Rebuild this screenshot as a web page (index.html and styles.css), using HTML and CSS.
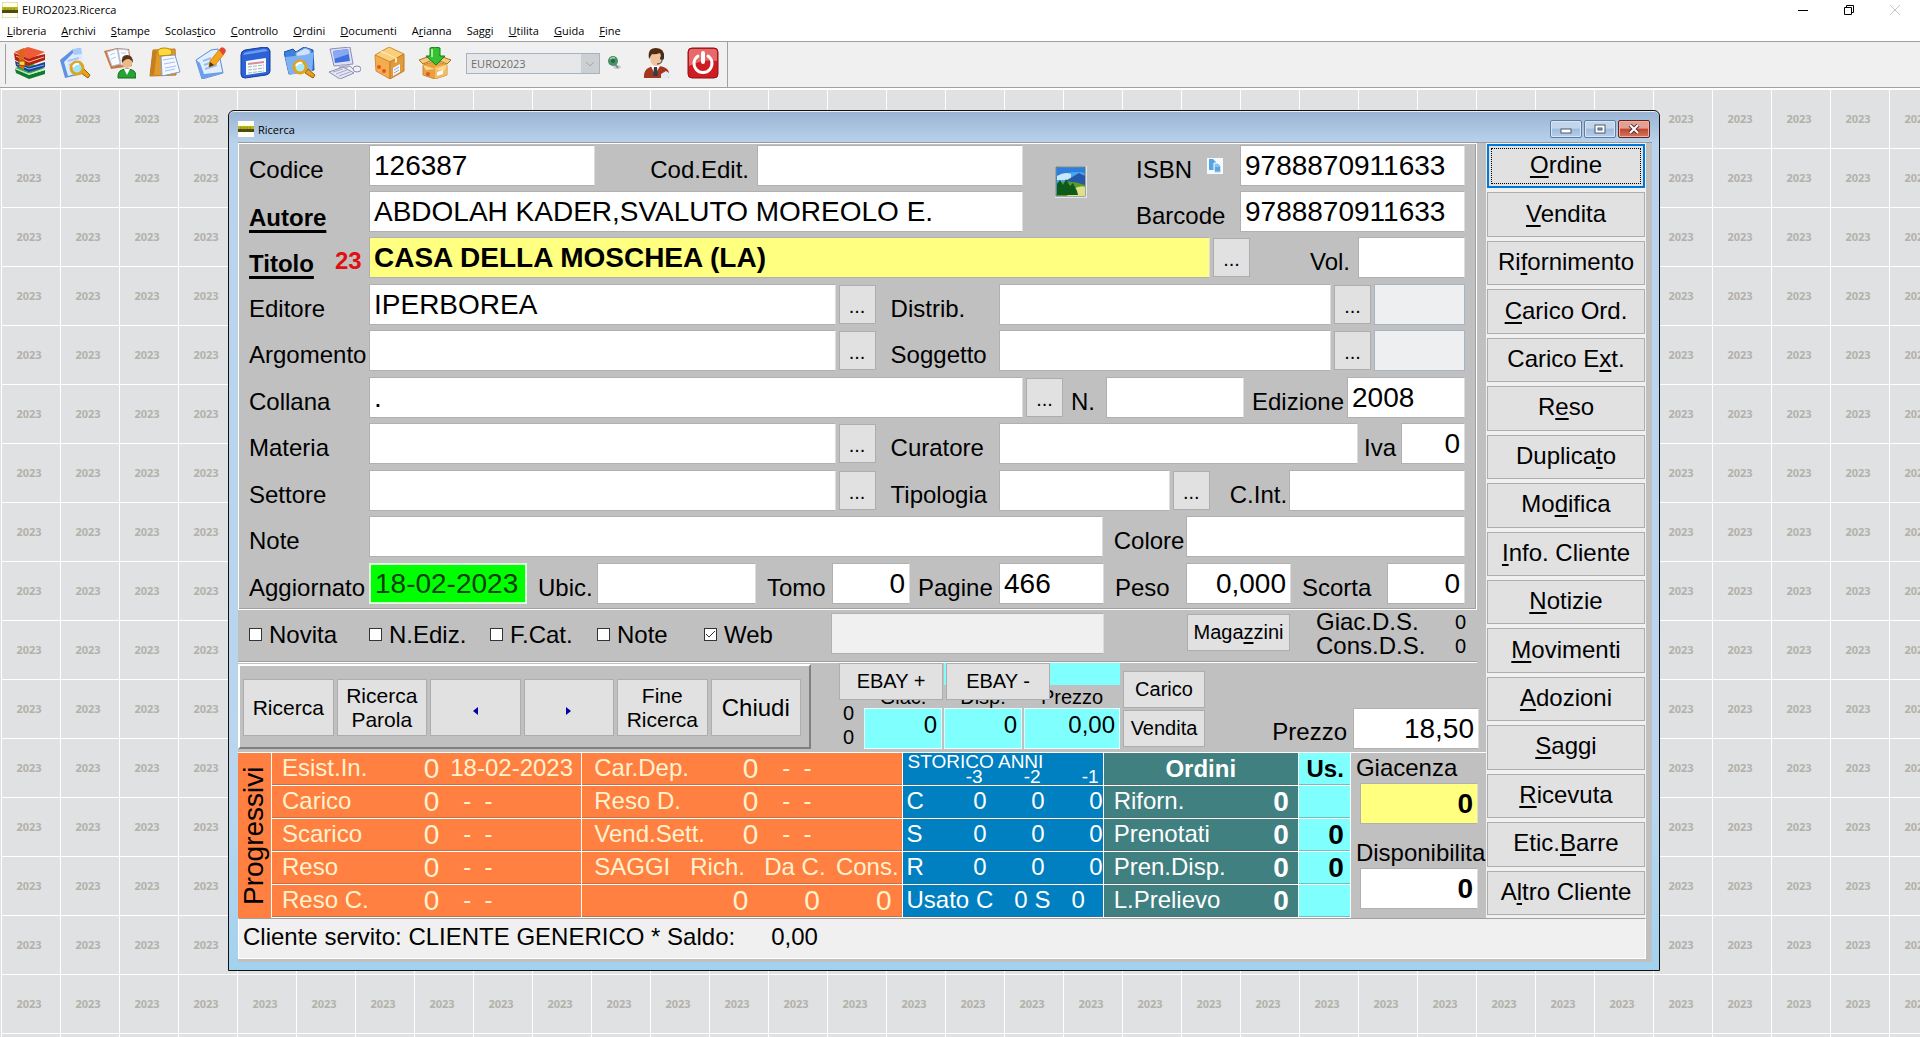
FILE: index.html
```html
<!DOCTYPE html>
<html lang="it">
<head>
  <meta charset="UTF-8">
  <title>EURO2023.Ricerca</title>
  <link rel="stylesheet" href="styles.css">
</head>
<body>
  <header class="app-title">
    <svg class="app-icon" viewBox="0 0 16 16"><rect width="16" height="16" fill="#fffef0" stroke="#c8c88a"/><rect y="5" width="16" height="4" fill="#b9b612"/><rect y="8" width="16" height="3" fill="#4c4a10"/><path d="M2 7h12" stroke="#8a8810" stroke-dasharray="2 1"/></svg>
    <span class="app-name">EURO2023.Ricerca</span>
    <button class="sys-btn" aria-label="Riduci"><svg width="12" height="12" viewBox="0 0 12 12"><path d="M1 6.500h10" stroke="#000"/></svg></button>
    <button class="sys-btn" aria-label="Ripristina"><svg width="12" height="12" viewBox="0 0 12 12"><path d="M1.500 3.500h7v7h-7zM3.500 3.500v-2h7v7h-2" fill="none" stroke="#000"/></svg></button>
    <button class="sys-btn" aria-label="Chiudi finestra"><svg width="12" height="12" viewBox="0 0 12 12"><path d="M1 1l10 10M11 1L1 11" stroke="#c4c4c4"/></svg></button>
  </header>

  <nav class="menu">
    <a href="#"><u>L</u>ibreria</a>
    <a href="#"><u>A</u>rchivi</a>
    <a href="#"><u>S</u>tampe</a>
    <a href="#">Scolas<u>t</u>ico</a>
    <a href="#"><u>C</u>ontrollo</a>
    <a href="#"><u>O</u>rdini</a>
    <a href="#"><u>D</u>ocumenti</a>
    <a href="#">A<u>r</u>ianna</a>
    <a href="#">Sa<u>g</u>gi</a>
    <a href="#"><u>U</u>tilita</a>
    <a href="#"><u>G</u>uida</a>
    <a href="#"><u>F</u>ine</a>
  </nav>

  <div class="toolbar">
    <div class="toolbar-group">
      <button class="tool" aria-label="Libri">
        <svg viewBox="0 0 32 32"><path d="M1 22l14 6 16-5v4l-16 5L2 26z" fill="#0e7a2c"/><path d="M1 21l14-5 16 5-16 6z" fill="#2fae4a"/><path d="M2 22l13 5 15-4" stroke="#bfe6c0" stroke-width="1" fill="none"/><path d="M1 14l14 6 16-5v5l-16 5L2 19z" fill="#1c3f96"/><path d="M3 17l12 5 15-4" stroke="#8fb4f0" stroke-width="1" fill="none"/><path d="M0 6l14 5 17-4v6l-17 6L1 13z" fill="#b3210f"/><path d="M0 5l14-5 17 5-16 7z" fill="#ef5a38"/><path d="M2 9l13 6 15-5" stroke="#ffb8a0" stroke-width="1" fill="none"/><path d="M5 3l5-2v22l-5-3z" fill="#d9661a"/><path d="M5 14h6v5l-6-1z" fill="#ffd24a" stroke="#8a4a00"/></svg>
      </button>
      <button class="tool" aria-label="Cerca documento">
        <svg viewBox="0 0 32 32"><path d="M1 14L20 0l3 1 1 24-18 6z" fill="#dcecff"/><path d="M1 13L13 3l8-2 1 3-8 2-9 9 4 14 14-4v2L6 31z" fill="#5f90e2"/><path d="M13 2l9-1 1 6-8 1z" fill="#a8caf8"/><path d="M9 14l11-3M10 18l4-1" stroke="#a9c6f0" stroke-width="2"/><path d="M22 26l7 5 2-3-6-6z" fill="#e9a11b" stroke="#9a5c08"/><circle cx="18" cy="21" r="6" fill="#9fe6fb" stroke="#e0a31c" stroke-width="3"/><path d="M14 20q2-4 6-3" stroke="#fff" stroke-width="2" fill="none"/></svg>
      </button>
      <button class="tool" aria-label="Clienti">
        <svg viewBox="0 0 32 32"><path d="M0 4L13 1l12 1 3 17-21 3z" fill="#c9773e"/><path d="M3 5l10-3 3 15-8 2zM14 2l10 1 3 14-10 1z" fill="#f8fbff" stroke="#b9c6dc"/><path d="M6 8l5-2M7 12l5-2M17 6h5M18 10h5" stroke="#b4cbec"/><path d="M14 31q-1-9 9-9t9 9z" fill="#27a336" stroke="#0f6f1d"/><path d="M20 22l3 6 3-6z" fill="#fff"/><circle cx="23" cy="16" r="5" fill="#eab98c"/><path d="M18 16q-1-8 5-8t6 8q-2-4-5-4t-6 4z" fill="#5a3415"/></svg>
      </button>
      <button class="tool" aria-label="Appunti">
        <svg viewBox="0 0 32 32"><path d="M4 3l22-1 1 26-26 1z" fill="#e39a2c" stroke="#b9741c"/><path d="M4 4h4L5 28H1z" fill="#c67f20"/><path d="M12 9l14-1 5 17-18 4z" fill="#f4f9ff" stroke="#7b9bd0"/><path d="M14 13l11-2M15 17l11-2M16 21l11-2M16 24l10-2" stroke="#a5c0ea"/><path d="M9 6q-1-5 6-5t8 4l-1 3-12 1z" fill="#ffd83a" stroke="#b98a0a"/></svg>
      </button>
      <button class="tool" aria-label="Modifica documento">
        <svg viewBox="0 0 32 32"><path d="M2 13L17 3l7-1 5 24-21 6z" fill="#e2efff" stroke="#5a8ae0"/><path d="M2 13l4 3 4 11 18-2 1 1-21 6z" fill="#6f9ee8"/><path d="M9 14l8-3M10 18l6-2M11 22l12-4" stroke="#9bbdec" stroke-width="2"/><path d="M16 14L25 3l5 4-9 11-6 2z" fill="#f7a41d" stroke="#d08a14"/><path d="M25 3q2-4 5-2t1 5l-2 2z" fill="#e2462c"/><path d="M16 15l-1 5 5-2z" fill="#4a3420"/></svg>
      </button>
      <button class="tool" aria-label="Tabella">
        <svg viewBox="0 0 32 32"><path d="M2 8q0-4 4-5L26 0q4 0 5 4v20q0 3-4 4L6 31q-4 0-4-4z" fill="#2b62d6" stroke="#123b9c"/><path d="M4 8q1-3 4-3l17-3q3 0 4 2z" fill="#6d9bf4"/><path d="M7 14l20-3v14L7 28z" fill="#f6faff"/><path d="M9 16l16-2v2L9 18z" fill="#d98a98"/><path d="M9 20l16-2M9 23l16-2M9 26l16-2" stroke="#9cbcb4" stroke-dasharray="4 1"/></svg>
      </button>
      <button class="tool" aria-label="Cerca in archivio">
        <svg viewBox="0 0 32 32"><path d="M0 5l9-3 3 3 8-5 9 3 1 20-25 4z" fill="#3f7fdd" stroke="#1d55ad"/><path d="M12 6l9-5 5 2 1 12-14 4z" fill="#cfe2fb" stroke="#7fa8de"/><path d="M1 10l20-2 9-3-2 19-23 4z" fill="#7db1f3"/><path d="M21 26l8 5 2-3-7-6z" fill="#e9a11b" stroke="#9a5c08"/><circle cx="16" cy="20" r="6" fill="#a9e9fb" stroke="#e0a31c" stroke-width="3"/><path d="M12 19q2-4 6-3" stroke="#fff" stroke-width="2" fill="none"/></svg>
      </button>
      <button class="tool" aria-label="Computer">
        <svg viewBox="0 0 32 32"><path d="M1 2l20-2 3 17-19 2z" fill="#dfe0f2" stroke="#8b8cb4"/><path d="M4 4l15-2 2 12-15 2z" fill="#3f6fe0"/><path d="M4 4l15-2 1 5-15 5z" fill="#86a9f2"/><path d="M10 18l8-1 1 4-9 1z" fill="#b7b8d2"/><path d="M0 25l14-5 11 6-14 6z" fill="#e6e7f4" stroke="#8b8cb4"/><path d="M4 25l10-3M7 27l11-4M10 29l11-4" stroke="#a5a6c6"/><ellipse cx="28" cy="22" rx="4" ry="3" fill="#f0f0f8" stroke="#8b8cb4"/><path d="M24 22q-3-4-6-3" stroke="#8b8cb4" fill="none"/></svg>
      </button>
      <button class="tool" aria-label="Magazzino">
        <svg viewBox="0 0 32 32"><path d="M1 8L15 0l15 7-14 8z" fill="#f9cf7c" stroke="#d08f35"/><path d="M1 8l15 7v17L2 24z" fill="#f3ad4c" stroke="#d08f35"/><path d="M30 7v17l-14 8V15z" fill="#e29a3e" stroke="#c07d28"/><path d="M8 4l15 7v4l-2 1v-5L6 5z" fill="#ffe6a4"/><path d="M19 21l7-4v8l-7 4z" fill="#f6f9ff"/><path d="M20 23l5-3M20 26l5-3" stroke="#86a2d6"/><circle cx="5" cy="20" r="2" fill="#e4542b"/><circle cx="10" cy="24" r="2" fill="#e4542b"/></svg>
      </button>
      <button class="tool" aria-label="Carico merce">
        <svg viewBox="0 0 32 32"><path d="M4 18l12-4 12 4v10l-12 4-12-4z" fill="#e9a13c" stroke="#c98a34"/><path d="M16 20v12l12-4V17z" fill="#f3bb62"/><path d="M4 17l-4-4 11-4 5 3zM28 17l4-4-11-4-5 3z" fill="#f7c977" stroke="#b06f16"/><path d="M4 18l12 4 12-4-3 6-9-2-9 1z" fill="#ffd992"/><path d="M18 25l6-2v4l-6 2z" fill="#f6f9ff"/><circle cx="9" cy="27" r="2" fill="#e4542b"/><path d="M11 1q5-2 10 0v8h5L17 18 7 9h4z" fill="#35c132" stroke="#128016"/><path d="M13 2v8" stroke="#a4f08a" stroke-width="2"/></svg>
      </button>
      <select class="archive-select" aria-label="Archivio" disabled><option>EURO2023</option></select>
      <svg class="pin" viewBox="0 0 14 14"><ellipse cx="10" cy="11" rx="4" ry="2" fill="#c9cfcf"/><path d="M8 8l3 4" stroke="#79908a" stroke-width="2"/><circle cx="6" cy="5" r="5" fill="#4a8f66"/><circle cx="6" cy="5" r="2" fill="#1f6a3f"/><path d="M3 3q2-2 5-1" stroke="#cdebd8" fill="none"/></svg>
      <button class="tool" aria-label="Operatore">
        <svg viewBox="0 0 32 32"><path d="M2 31q-1-11 11-12h4q12 1 10 12z" fill="#a5371c"/><path d="M19 27l5-3 6 4-5 4h-6z" fill="#e6eaf1"/><path d="M9 19l4 9 5-9z" fill="#fff"/><path d="M12 20h3l1 9h-5z" fill="#353b48"/><ellipse cx="14" cy="11" rx="6" ry="8" fill="#efc39c"/><path d="M7 12Q5 1 14 1t8 10l-2 1-2-6q-5 2-8 1z" fill="#512a12"/><circle cx="20" cy="11" r="2" fill="#333"/><path d="M20 13q0 4-5 4" stroke="#333" fill="none"/></svg>
      </button>
      <button class="tool" aria-label="Esci">
        <svg viewBox="0 0 32 32"><rect x="1" y="1" width="30" height="30" rx="4" fill="#cf1c22" stroke="#8f1015"/><path d="M2 5q0-3 3-3h22q3 0 3 3v9Q16 12 2 19z" fill="#e66a6a"/><path d="M11 9a9 9 0 1 0 10 0" fill="none" stroke="#fff" stroke-width="3" stroke-linecap="round"/><path d="M16 6v9" stroke="#fff" stroke-width="4" stroke-linecap="round"/></svg>
      </button>
    </div>
  </div>

  <main class="desktop">
    <div class="tiles" id="tiles"></div>

    <section class="window" id="window">
      <div class="window-title">
        <svg class="app-icon" viewBox="0 0 16 16"><rect width="16" height="16" fill="#fffef0"/><rect y="5" width="16" height="4" fill="#b9b612"/><rect y="8" width="16" height="3" fill="#4c4a10"/><path d="M2 7h12" stroke="#8a8810" stroke-dasharray="2 1"/></svg>
        <span class="window-name">Ricerca</span>
        <button class="win-btn" aria-label="Riduci scheda"><svg width="12" height="10" viewBox="0 0 12 10"><rect x="1" y="5" width="10" height="4" fill="#fff" stroke="#4b5b73"/></svg></button>
        <button class="win-btn" aria-label="Ingrandisci scheda"><svg width="12" height="10" viewBox="0 0 12 10"><rect x="1" y="1" width="10" height="8" fill="#fff" stroke="#4b5b73"/><rect x="4" y="4" width="4" height="2" fill="#9cb5d6" stroke="#4b5b73"/></svg></button>
        <button class="win-btn win-close" aria-label="Chiudi scheda"><svg width="12" height="10" viewBox="0 0 12 10"><path d="M2 1l8 8M10 1L2 9" stroke="#5a3030" stroke-width="4"/><path d="M2 1l8 8M10 1L2 9" stroke="#fff" stroke-width="2"/></svg></button>
      </div>

      <div class="client">
        <div class="columns">
          <div class="left">
            <form class="book">
              <div class="head">
                <label for="codice">Codice</label>
                <input id="codice" class="field" value="126387">
                <label for="codedit" class="to-right">Cod.Edit.</label>
                <input id="codedit" class="field">
                <button type="button" class="picture" aria-label="Immagine">
                  <svg width="32" height="32" viewBox="0 0 32 32"><rect width="32" height="32" fill="#e4e4e4"/><rect x="1" y="1" width="29" height="29" fill="#4aa6ee" stroke="#5d6b66"/><path d="M2 2h28v5q-12-3-28 3z" fill="#2d7fdf"/><path d="M2 10q8-5 14-2v6H2z" fill="#c8e8fc"/><path d="M12 14l12-7 6 3v9H10z" fill="#2558a8"/><path d="M2 17q14-4 28 2v11H2z" fill="#5c9a2c"/><path d="M18 23q8-4 12-2v9H12z" fill="#dfe08a"/><path d="M2 29V18l3-4 3 5 3-6 4 7 3-3 4 8 1 4z" fill="#0d5a1c"/></svg>
                </button>
                <label for="isbn">ISBN</label>
                <button type="button" class="copy" aria-label="Copia ISBN">
                  <svg width="16" height="16" viewBox="0 0 16 16"><rect width="16" height="16" fill="#f5fafe"/><path d="M2 1h4l3 3v8H2z" fill="#56a5e4"/><path d="M7 5h4l3 3v7H7z" fill="#8cc3ee" stroke="#fff"/><path d="M8 10h5M8 12h5" stroke="#3585cb"/></svg>
                </button>
                <input id="isbn" class="field" value="9788870911633">
                <label for="autore" class="key">Autore</label>
                <input id="autore" class="field wide" value="ABDOLAH KADER,SVALUTO MOREOLO E.">
                <label for="barcode" class="barcode-label">Barcode</label>
                <input id="barcode" class="field" value="9788870911633">
              </div>

              <div class="row row-titolo">
                <label for="titolo" class="key">Titolo</label>
                <span class="count">23</span>
                <input id="titolo" class="field title-field" value="CASA DELLA MOSCHEA (LA)">
                <button type="button" class="more">...</button>
                <label for="vol" class="to-right">Vol.</label>
                <input id="vol" class="field">
              </div>

              <div class="row row-lookup">
                <label for="editore">Editore</label>
                <input id="editore" class="field" value="IPERBOREA">
                <button type="button" class="more">...</button>
                <label for="distrib" class="second">Distrib.</label>
                <input id="distrib" class="field">
                <button type="button" class="more">...</button>
                <input class="field locked" aria-label="Codice distributore" disabled>
              </div>

              <div class="row row-lookup">
                <label for="argomento">Argomento</label>
                <input id="argomento" class="field">
                <button type="button" class="more">...</button>
                <label for="soggetto" class="second">Soggetto</label>
                <input id="soggetto" class="field">
                <button type="button" class="more">...</button>
                <input class="field locked" aria-label="Codice soggetto" disabled>
              </div>

              <div class="row row-collana">
                <label for="collana">Collana</label>
                <input id="collana" class="field" value=".">
                <button type="button" class="more">...</button>
                <label for="numero" class="near">N.</label>
                <input id="numero" class="field">
                <label for="edizione" class="near">Edizione</label>
                <input id="edizione" class="field" value="2008">
              </div>

              <div class="row row-materia">
                <label for="materia">Materia</label>
                <input id="materia" class="field">
                <button type="button" class="more">...</button>
                <label for="curatore" class="second">Curatore</label>
                <input id="curatore" class="field">
                <label for="iva" class="tight">Iva</label>
                <input id="iva" class="field num" value="0">
              </div>

              <div class="row row-settore">
                <label for="settore">Settore</label>
                <input id="settore" class="field">
                <button type="button" class="more">...</button>
                <label for="tipologia" class="second">Tipologia</label>
                <input id="tipologia" class="field">
                <button type="button" class="more">...</button>
                <label for="cint" class="cint">C.Int.</label>
                <input id="cint" class="field">
              </div>

              <div class="row row-note">
                <label for="note">Note</label>
                <input id="note" class="field">
                <label for="colore" class="next">Colore</label>
                <input id="colore" class="field">
              </div>

              <div class="row row-aggiornato">
                <label for="aggiornato">Aggiornato</label>
                <input id="aggiornato" class="field date" value="18-02-2023">
                <label for="ubic" class="next">Ubic.</label>
                <input id="ubic" class="field">
                <label for="tomo" class="next">Tomo</label>
                <input id="tomo" class="field num" value="0">
                <label for="pagine" class="near">Pagine</label>
                <input id="pagine" class="field" value="466">
                <label for="peso" class="next">Peso</label>
                <input id="peso" class="field num" value="0,000">
                <label for="scorta" class="next">Scorta</label>
                <input id="scorta" class="field num" value="0">
              </div>
            </form>

            <div class="flags">
              <label class="check"><input type="checkbox">Novita</label>
              <label class="check"><input type="checkbox">N.Ediz.</label>
              <label class="check"><input type="checkbox">F.Cat.</label>
              <label class="check"><input type="checkbox">Note</label>
              <label class="check"><input type="checkbox" checked>Web</label>
              <input class="field locked-plain" aria-label="Stato" disabled>
              <button class="small-btn stock-btn">Maga<u>z</u>zini</button>
              <dl class="deposit">
                <dt>Giac.D.S.</dt><dd>0</dd>
                <dt>Cons.D.S.</dt><dd>0</dd>
              </dl>
            </div>

            <div class="middle">
              <div class="search-panel">
                <button class="search-btn">Ricerca</button>
                <button class="search-btn">Ricerca<br>Parola</button>
                <button class="search-btn" aria-label="Precedente"><svg width="5" height="8" viewBox="0 0 5 8"><path d="M5 0v8L0 4z" fill="#0000a8"/></svg></button>
                <button class="search-btn" aria-label="Successivo"><svg width="5" height="8" viewBox="0 0 5 8"><path d="M0 0v8l5-4z" fill="#0000a8"/></svg></button>
                <button class="search-btn">Fine<br>Ricerca</button>
                <button class="search-btn big">Chiudi</button>
              </div>

              <div class="used">
                <div class="used-strip"></div>
                <label for="u-giac" class="used-giac">Giac.</label>
                <label for="u-disp" class="used-disp">Disp.</label>
                <label for="u-prezzo" class="used-prezzo">Prezzo</label>
                <div class="used-counts"><span>0</span><span>0</span></div>
                <input id="u-giac" class="field cyan num" value="0">
                <input id="u-disp" class="field cyan num" value="0">
                <input id="u-prezzo" class="field cyan num" value="0,00">
                <div class="ebay">
                  <button class="small-btn">EBAY +</button>
                  <button class="small-btn">EBAY -</button>
                </div>
              </div>
              <div class="moves">
                <button class="small-btn">Carico</button>
                <button class="small-btn">Vendita</button>
              </div>
              <label for="prezzo" class="price-label">Prezzo</label>
              <input id="prezzo" class="field price num" value="18,50">
            </div>

            <div class="summary">
              <div class="side-title">Progressivi</div>

              <table class="tbl orange">
                <tr><td>Esist.In.</td><td class="n">0</td><td class="day">18-02-2023</td></tr>
                <tr><td>Carico</td><td class="n">0</td><td class="dash">-&nbsp; -</td></tr>
                <tr><td>Scarico</td><td class="n">0</td><td class="dash">-&nbsp; -</td></tr>
                <tr><td>Reso</td><td class="n">0</td><td class="dash">-&nbsp; -</td></tr>
                <tr><td>Reso C.</td><td class="n">0</td><td class="dash">-&nbsp; -</td></tr>
              </table>

              <table class="tbl orange deposit-tbl">
                <tr><td>Car.Dep.</td><td class="n">0</td><td class="dash" colspan="2">-&nbsp; -</td></tr>
                <tr><td>Reso D.</td><td class="n">0</td><td class="dash" colspan="2">-&nbsp; -</td></tr>
                <tr><td>Vend.Sett.</td><td class="n">0</td><td class="dash" colspan="2">-&nbsp; -</td></tr>
                <tr><td>SAGGI</td><td class="h">Rich.</td><td class="h">Da C.</td><td class="h">Cons.</td></tr>
                <tr><td></td><td class="n t">0</td><td class="n t">0</td><td class="n t">0</td></tr>
              </table>

              <table class="tbl blue">
                <colgroup><col><col class="year"><col class="year"><col class="year"></colgroup>
                <tr><th colspan="4"><div class="years-title">STORICO ANNI</div><div class="years"><span>-3</span><span>-2</span><span>-1</span></div></th></tr>
                <tr><td>C</td><td>0</td><td>0</td><td>0</td></tr>
                <tr><td>S</td><td>0</td><td>0</td><td>0</td></tr>
                <tr><td>R</td><td>0</td><td>0</td><td>0</td></tr>
                <tr><td colspan="4" class="used-years"><span>Usato C</span><span>0</span><span>S</span><span>0</span></td></tr>
              </table>

              <table class="tbl teal">
                <colgroup><col><col class="qty"><col class="qty-used"></colgroup>
                <tr><th colspan="2">Ordini</th><th class="us">Us.</th></tr>
                <tr><td>Riforn.</td><td class="n">0</td><td class="us"></td></tr>
                <tr><td>Prenotati</td><td class="n">0</td><td class="us">0</td></tr>
                <tr><td>Pren.Disp.</td><td class="n">0</td><td class="us">0</td></tr>
                <tr><td>L.Prelievo</td><td class="n">0</td><td class="us"></td></tr>
              </table>

              <div class="stock">
                <label for="giacenza">Giacenza</label>
                <input id="giacenza" class="field num strong yellow" value="0">
                <label for="disponibilita">Disponibilita</label>
                <input id="disponibilita" class="field num strong" value="0">
              </div>
            </div>
          </div>

          <div class="actions">
            <button class="action focused"><u>O</u>rdine</button>
            <button class="action"><u>V</u>endita</button>
            <button class="action">Ri<u>f</u>ornimento</button>
            <button class="action"><u>C</u>arico Ord.</button>
            <button class="action">Carico E<u>x</u>t.</button>
            <button class="action">R<u>e</u>so</button>
            <button class="action">Duplica<u>t</u>o</button>
            <button class="action">Mo<u>d</u>ifica</button>
            <button class="action"><u>I</u>nfo. Cliente</button>
            <button class="action"><u>N</u>otizie</button>
            <button class="action"><u>M</u>ovimenti</button>
            <button class="action"><u>A</u>dozioni</button>
            <button class="action"><u>S</u>aggi</button>
            <button class="action"><u>R</u>icevuta</button>
            <button class="action">Etic.<u>B</u>arre</button>
            <button class="action">A<u>l</u>tro Cliente</button>
          </div>
        </div>

        <footer class="status">
          <span>Cliente servito: CLIENTE GENERICO * Saldo:</span>
          <span>0,00</span>
        </footer>
      </div>
    </section>
  </main>

  <script src="script.js"></script>
</body>
</html>
```

FILE: script.js
```js
// fill the desktop with the year tiles, blank where the window covers them
const SIZE = 59;

function drawTiles() {
  const tiles = document.getElementById('tiles');
  const win = document.getElementById('window');
  const cols = Math.ceil(tiles.clientWidth / SIZE);
  const rows = Math.ceil(tiles.clientHeight / SIZE);
  const left = win.offsetLeft;
  const right = left + win.offsetWidth;
  const top = win.offsetTop;
  const bottom = top + win.offsetHeight;

  tiles.innerHTML = '';
  tiles.style.gridTemplateColumns = 'repeat(' + cols + ', ' + SIZE + 'px)';
  for (let i = 0; i < cols * rows; i++) {
    const x = (i % cols) * SIZE + SIZE / 2;
    const y = Math.floor(i / cols) * SIZE + SIZE / 2;
    const covered = x > left && x < right && y > top && y < bottom;
    const div = document.createElement('div');
    div.className = 'tile';
    div.textContent = covered ? '' : '2023';
    tiles.appendChild(div);
  }
}

drawTiles();
window.addEventListener('resize', drawTiles);
```

FILE: styles.css
```css
* {
  box-sizing: border-box;
}
body {
  margin: 0;
  height: 100vh;
  display: flex;
  flex-direction: column;
  overflow: hidden;
  background: #fff;
  font-family: "Liberation Sans", Arial, sans-serif;
  font-size: 24px;
  color: #000;
}
button, input, select {
  font-family: inherit;
  color: inherit;
  margin: 0;
}
button {
  padding: 0;
  border: 1px solid #adadad;
  background: #e1e1e1;
  white-space: nowrap;
}
u {
  text-underline-offset: 3px;
}

/* application bars */
.app-title {
  display: flex;
  align-items: center;
  gap: 4px;
  height: 19px;
  padding-left: 2px;
  padding-right: 4px;
  font: 11px "Open Sans", sans-serif;
}
.app-icon {
  width: 16px;
  height: 16px;
}
.app-name {
  flex: 1;
}
.sys-btn {
  width: 42px;
  height: 16px;
  border: 0;
  background: none;
  display: grid;
  place-items: center;
}
.menu {
  display: flex;
  gap: 15px;
  height: 22px;
  padding-left: 7px;
  font: 11px/24px "Open Sans", sans-serif;
}
.menu a {
  color: #000;
  text-decoration: none;
}
.menu u {
  text-underline-offset: 1px;
}
.toolbar {
  display: flex;
  height: 48px;
  border-top: 1px solid #a0a0a0;
  border-bottom: 1px solid #fff;
  background: #f0f0f0;
  box-shadow: inset 0 -1px #a0a0a0;
}
.toolbar-group {
  display: flex;
  align-items: flex-start;
  gap: 13px;
  width: 728px;
  padding: 5px 0 0 14px;
  border-right: 1px solid #a0a0a0;
  background: linear-gradient(#a0a0a0, #a0a0a0) 5px 2px / 1px 40px no-repeat;
}
.tool {
  flex: none;
  width: 32px;
  height: 32px;
  border: 0;
  background: none;
}
.tool svg {
  display: block;
}
.archive-select {
  appearance: none;
  flex: none;
  width: 134px;
  height: 21px;
  margin: 6px 0 0 2px;
  padding: 0 20px 0 4px;
  border: 1px solid #a5b3c4;
  border-radius: 0;
  background: #e6e7e8 url("data:image/svg+xml,%3Csvg xmlns='http://www.w3.org/2000/svg' viewBox='0 0 18 19'%3E%3Cpath d='M0 0h18v19H0z' fill='%23cdd0d3'/%3E%3Cpath d='M5 8l4 4 4-4' fill='none' stroke='%23a4a8a8'/%3E%3C/svg%3E") right / 18px 19px no-repeat;
  color: #6d6d6d;
  opacity: 1;
  font: 11px "Open Sans", sans-serif;
}
.pin {
  flex: none;
  width: 14px;
  height: 14px;
  margin: 9px 8px 0 -6px;
}

/* desktop */
.desktop {
  position: relative;
  flex: 1;
  overflow: hidden;
  background: #e0e1e3;
}
.tiles {
  display: grid;
  grid-auto-rows: 59px;
  height: 100%;
  margin-left: 1px;
}
.tile {
  border-top: 1px solid #fff;
  border-left: 1px solid #fff;
  padding-right: 4px;
  font: bold 11px/58px "Noto Sans", sans-serif;
  text-align: center;
  color: #b2b2aa;
}

/* window */
.window {
  position: absolute;
  top: 21px;
  left: 228px;
  right: 260px;
  padding: 0 7px 8px 9px;
  border: 1px solid #111;
  border-radius: 6px 6px 0 0;
  background: linear-gradient(#9ab3d2, #b9d3ec 32px, #b9d6ee 80%, #a3d2ee);
  box-shadow: inset 0 1px #e8f0fa;
}
.window-title {
  display: flex;
  align-items: center;
  gap: 2px;
  height: 31px;
  padding-top: 5px;
  padding-right: 2px;
  font: 11px "Open Sans", sans-serif;
}
.window-name {
  flex: 1;
  padding-left: 2px;
}
.win-btn {
  display: grid;
  place-items: center;
  width: 32px;
  height: 18px;
  border: 1px solid #5f7ba3;
  border-radius: 2px;
  background: linear-gradient(#c3d5ea 45%, #a0bbdb 50%, #b7cfe9);
  box-shadow: inset 0 0 0 1px #d7e5f4;
}
.win-close {
  border-color: #6b2020;
  background: linear-gradient(#e3a090 45%, #c1442e 50%, #d4775f);
  box-shadow: inset 0 0 0 1px #e9b4a8;
}
.client {
  padding: 0 6px 3px 0;
  border-top: 1px solid #9a9a9a;
  background: #c0c0c0;
}
.columns {
  display: grid;
  grid-template-columns: minmax(0, 1fr) 160px;
}

/* form */
.book {
  margin-right: 9px;
  padding: 2px 11px 5px 10px;
  border-left: 1px solid #fff;
  border-right: 1px solid #fff;
  border-bottom: 1px solid #fff;
  box-shadow: inset 0 1px #fff, inset -1px -1px #a0a0a0;
}
.head, .row {
  display: grid;
}
.head {
  grid-template-columns: 120px 226px 162px minmax(0, 1fr) 113px 71px 33px 225px;
  grid-template-rows: 41px 41px;
  row-gap: 5px;
}
.row {
  grid-template-rows: 41px;
  margin-top: 5px;
}
.row:nth-child(odd) {
  margin-top: 6px;
}
.row-titolo { grid-template-columns: 86px 34px minmax(0, 1fr) 40px 108px 107px; }
.row-lookup { grid-template-columns: 120px minmax(0, 466fr) 40px 123px minmax(0, 332fr) 40px 94px; }
.row-collana { grid-template-columns: 120px minmax(0, 1fr) 40px 43px 138px 103px 118px; }
.row-materia { grid-template-columns: 120px minmax(0, 466fr) 40px 123px minmax(0, 359fr) 43px 64px; }
.row-settore { grid-template-columns: 120px minmax(0, 466fr) 40px 123px minmax(0, 171fr) 40px 79px minmax(0, 176fr); }
.row-note { grid-template-columns: 120px minmax(0, 733fr) 83px minmax(0, 279fr); }
.row-aggiornato { grid-template-columns: 120px 158px 70px minmax(0, 1fr) 76px 78px 89px 105px 82px 105px 96px 78px; }

.book label {
  padding-top: 8px;
  line-height: 33px;
  white-space: nowrap;
}
.book .to-right {
  padding-right: 8px;
  text-align: right;
}
.book .second { padding-left: 15px; }
.book .near { padding-left: 8px; }
.book .next { padding-left: 11px; }
.book .tight { padding-left: 6px; }
.book .cint { padding-left: 20px; }
.book .key {
  padding-top: 10px;
  font-weight: bold;
  text-decoration: underline;
  text-decoration-thickness: 3px;
  text-underline-offset: 4px;
}
.field {
  width: 100%;
  min-width: 0;
  height: 41px;
  padding: 0 4px;
  border: 1px solid #b0b0b0;
  border-right-color: #dcdcdc;
  border-radius: 0;
  background: #fff;
  font-size: 28px;
}
.num {
  text-align: right;
}
.wide {
  grid-column: span 3;
}
.picture {
  grid-column: 5;
  grid-row: 1 / span 2;
  align-self: center;
  width: 32px;
  height: 32px;
  margin: 0 0 14px 32px;
  border: 0;
  background: none;
}
.copy {
  width: 16px;
  height: 16px;
  margin-top: 13px;
  border: 0;
  background: none;
}
.copy svg, .picture svg {
  display: block;
}
.barcode-label {
  grid-column: 6 / span 2;
}
.count {
  color: #e01010;
  font-weight: bold;
  line-height: 48px;
}
.title-field {
  background: #ffff80;
  font-weight: bold;
}
.more {
  margin: 1px 0 1px 3px;
  padding-top: 4px;
  font-size: 20px;
}
.locked {
  width: 91px;
  margin-left: 3px;
  border-color: #a8b4c4;
  background: #eeeff1;
}
.date {
  border: 2px solid #d8ffd8;
  background: #00ff00;
  color: #104010;
}

/* flags */
.flags {
  display: grid;
  grid-template-columns: 120px 121px 107px 107px 127px minmax(0, 1fr) 82px 105px 175px;
  margin-right: 9px;
  height: 53px;
  padding: 3px 11px 0 11px;
  border-bottom: 1px solid #fff;
  box-shadow: inset 0 -1px #a0a0a0;
}
.check {
  display: flex;
  align-items: center;
  gap: 7px;
  height: 43px;
}
.check input {
  appearance: none;
  width: 13px;
  height: 13px;
  border: 1px solid #333;
  background: #fff;
}
.check input:checked {
  background: #fff url("data:image/svg+xml,%3Csvg xmlns='http://www.w3.org/2000/svg' viewBox='0 0 11 11'%3E%3Cpath d='M1 5l3 3 6-6' fill='none' stroke='%23333'/%3E%3C/svg%3E");
}
.locked-plain {
  background: #f0f0f0;
}
.small-btn {
  height: 37px;
  font-size: 20px;
}
.stock-btn {
  grid-column: 8;
  margin: 1px 1px 0;
}
.deposit {
  display: grid;
  grid-template-columns: 1fr auto;
  height: 48px;
  margin: -3px 0 0 25px;
  line-height: 24px;
}
.deposit dd {
  margin: 0;
  font-size: 20px;
}

/* search panel and second-hand stock */
.middle {
  display: flex;
  align-items: flex-start;
  height: 89px;
  padding-right: 7px;
}
.search-panel {
  display: flex;
  flex: none;
  gap: 3px;
  width: 573px;
  height: 85px;
  margin-top: 1px;
  padding: 13px 8px 0 3px;
  border: 2px solid #fff;
  border-right-color: #808080;
  border-bottom-color: #808080;
}
.search-btn {
  flex: 1;
  height: 57px;
  font-size: 21px;
  line-height: 24px;
}
.big {
  font-size: 24px;
}
.used {
  position: relative;
  display: grid;
  grid-template-columns: 23px 78px 78px 96px;
  grid-template-rows: 22px 23px 41px;
  column-gap: 2px;
  margin-left: 28px;
  font-size: 20px;
}
.used-strip {
  grid-column: 3 / span 2;
  background: #80ffff;
}
.used label {
  grid-row: 2;
  line-height: 25px;
  text-align: center;
}
.used-giac {
  grid-column: 2;
}
.used-disp {
  grid-column: 3;
}
.used-prezzo {
  grid-column: 4;
}
.used-counts {
  display: grid;
  align-self: end;
  grid-row: 3;
  grid-column: 1;
  padding-left: 4px;
  line-height: 24px;
}
.used .field {
  grid-row: 3;
}
.cyan {
  padding-bottom: 7px;
  background: #80ffff;
  border-color: #e8ffff;
  font-size: 24px;
}
.ebay {
  position: absolute;
  top: 0;
  left: 0;
  display: flex;
  gap: 3px;
}
.ebay button {
  width: 104px;
}
.moves {
  display: grid;
  gap: 2px;
  width: 82px;
  margin: 8px auto 0 3px;
}
.price-label {
  margin-top: 55px;
  line-height: 28px;
}
.price {
  width: 126px;
  margin: 45px 0 0 6px;
}

/* summary tables */
.summary {
  display: grid;
  grid-template-columns: 34px minmax(0, 310fr) minmax(0, 320fr) minmax(0, 201fr) minmax(0, 247fr) minmax(0, 135fr);
  border-top: 1px solid #fff;
}
.side-title {
  writing-mode: vertical-rl;
  transform: rotate(180deg);
  background: #ff8040;
  border-left: 1px solid #fff;
  font-size: 28px;
  line-height: 32px;
  text-align: center;
}
.tbl {
  width: 100%;
  border-spacing: 0;
  table-layout: fixed;
  border-right: 1px solid #fff;
  color: #fff;
  line-height: 28px;
}
.tbl td, .tbl th {
  height: 33px;
  padding: 0 0 3px;
  border-bottom: 1px solid #fff;
  box-shadow: inset 0 -1px rgba(96, 96, 96, 0.4);
  white-space: nowrap;
}
.tbl td:first-child {
  padding-left: 10px;
}
.tbl .n {
  padding: 0;
  font-size: 28px;
  text-align: right;
}
.orange {
  background: #ff8040;
  color: #fff2d0;
}
.orange .day {
  width: 142px;
  padding-left: 11px;
}
.orange .n {
  width: 68px;
}
.orange .dash {
  padding-left: 24px;
}
.deposit-tbl td:first-child {
  width: 108px;
  padding-left: 12px;
}
.deposit-tbl .t {
  padding-right: 10px;
}
.deposit-tbl .h {
  padding-left: 6px;
}
.deposit-tbl .h:nth-child(2) {
  padding-left: 0;
}
.blue {
  background: #0080c0;
}
.blue th {
  padding: 0;
  font-weight: normal;
  font-size: 19px;
  line-height: 16px;
  text-align: left;
}
.years-title {
  padding-left: 5px;
}
.years {
  display: grid;
  grid-template-columns: 80fr 58fr 58fr;
  padding-right: 4px;
  line-height: 14px;
  text-align: right;
}
.year {
  width: 58px;
}
.blue td {
  text-align: right;
}
.blue td:first-child {
  padding-left: 4px;
  text-align: left;
}
.used-years span + span {
  padding-left: 7px;
}
.used-years span:nth-child(2), .used-years span:last-child {
  padding-left: 21px;
}
.teal {
  background: #408080;
}
.qty {
  width: 60px;
}
.qty-used {
  width: 52px;
}
.tbl.teal .n {
  padding-right: 9px;
  font-weight: bold;
}
.tbl .us {
  padding: 0 6px 0 0;
  border-left: 1px solid #fff;
  background: #80ffff;
  color: #000;
  font-weight: bold;
  text-align: right;
}
.tbl td.us {
  font-size: 28px;
}
.teal th {
  padding: 0;
}
.stock {
  display: flex;
  flex-direction: column;
  padding: 0 8px 0 9px;
}
.stock label {
  margin-left: -4px;
  line-height: 30px;
}
.stock label + .field + label {
  margin-top: 14px;
}
.strong {
  font-weight: bold;
}
.yellow {
  background: #ffff80;
}

/* action buttons */
.actions {
  display: grid;
  grid-auto-rows: 1fr;
  gap: 4px;
  padding: 1px 1px 3px;
  background: #f0f0f0;
}
.action {
  padding-bottom: 2px;
  font-size: 24px;
}
.focused {
  border: 2px solid #0078d7;
  outline: 1px dotted #000;
  outline-offset: -5px;
}

.status {
  display: flex;
  gap: 36px;
  height: 41px;
  padding-left: 4px;
  border: 1px solid #fff;
  border-top-color: #a0a0a0;
  background: #f0f0f0;
  line-height: 35px;
}
```
